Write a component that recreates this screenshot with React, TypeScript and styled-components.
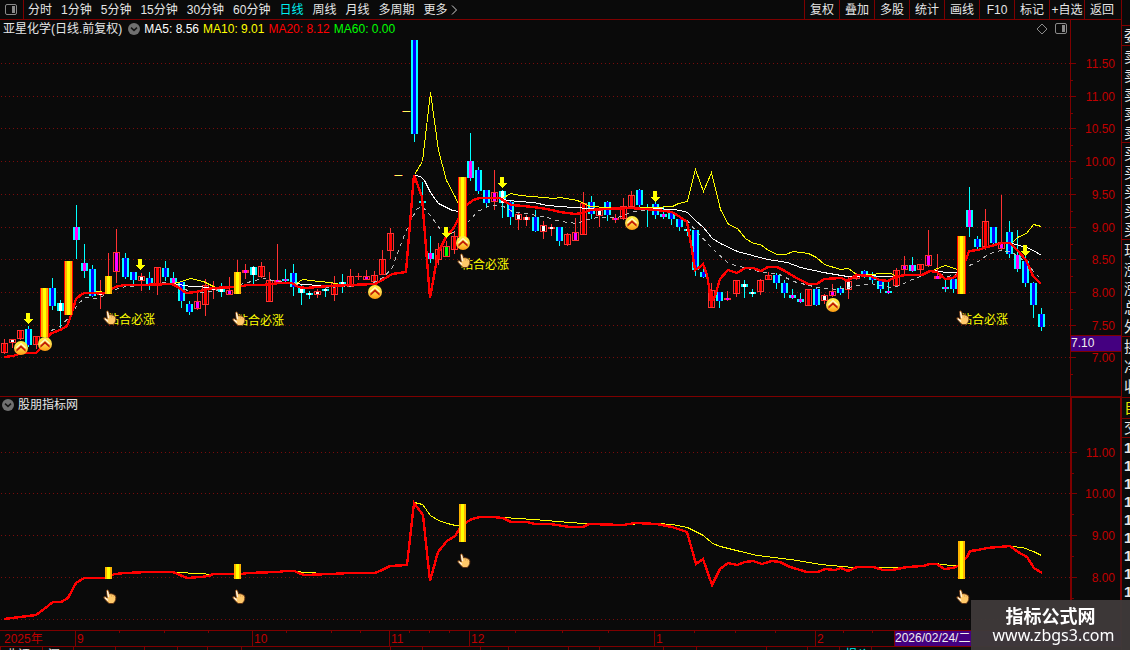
import React from "react";
import styled, { createGlobalStyle } from "styled-components";

const BG = "#0a0a0a";
const LINE = "#7e0000";
const AXIS_TEXT = "#c00000";
const SANS = '"Liberation Sans", "Noto Sans CJK SC", sans-serif';

const GlobalStyle = createGlobalStyle`
  * { box-sizing: border-box; }
  body { margin: 0; background: ${BG}; overflow: hidden; font: 12px/18px ${SANS}; color: #e6e6e6; }
  button { font: inherit; color: inherit; background: none; border: 0; padding: 0; margin: 0; cursor: pointer; white-space: nowrap; }
  svg { display: block; }
`;

const Page = styled.div`
  display: flex;
  height: 100vh;
  overflow: hidden;
  background: ${BG};
`;

const Main = styled.main`
  flex: 1;
  min-width: 0;
  display: flex;
  flex-direction: column;
`;

const Toolbar = styled.nav`
  display: flex;
  height: 20px;
  flex: none;
  border-bottom: 1px solid ${LINE};
`;

const LayoutButton = styled.button`
  width: 24px;
  padding-left: 5px;
  border-right: 1px solid ${LINE};
`;

const Periods = styled.div`
  display: flex;
  flex: 1;
  gap: 9px;
  padding-left: 4px;
`;

const PeriodButton = styled.button<{ $active?: boolean }>`
  display: flex;
  align-items: center;
  color: ${(p) => (p.$active ? "#00f0f0" : "#e6e6e6")};
`;

const ToolButton = styled.button`
  width: 35px;
  border-left: 1px solid ${LINE};
  text-align: center;
  &:last-child { width: 37px; padding-right: 2px; }
`;

const Panel = styled.section`
  display: flex;
  flex: none;
`;

const Plot = styled.div`
  flex: 1;
  min-width: 0;
  overflow: hidden;
`;

const Legend = styled.header<{ $height: number }>`
  display: flex;
  align-items: center;
  gap: 4px;
  height: ${(p) => p.$height}px;
  padding: 0 3px 1px 2px;
  white-space: nowrap;
`;

const StockName = styled.span`
  padding: 0 2px 0 1px;
`;

const LegendValue = styled.span<{ $color: string }>`
  color: ${(p) => p.$color};
`;

const LegendTools = styled.div`
  display: flex;
  gap: 7px;
  margin-left: auto;
`;

const Scale = styled.aside<{ $heavy?: boolean }>`
  position: relative;
  flex: 0 0 51px;
  border-left: ${(p) => (p.$heavy ? 2 : 1)}px solid ${LINE};
  border-right: ${(p) => (p.$heavy ? 1 : 0)}px solid ${LINE};
  border-top: ${(p) => (p.$heavy ? 1 : 0)}px solid ${LINE};
`;

const PriceTag = styled.output`
  position: absolute;
  left: 0;
  right: 0;
  top: 315px;
  height: 17px;
  line-height: 15px;
  background: #440080;
  border: solid ${LINE};
  border-width: 1px 0;
  color: #f0f0f0;
`;

const Divider = styled.div`
  flex: none;
  height: 1px;
  background: ${LINE};
`;

const TimeAxis = styled.div`
  position: relative;
  display: flex;
  flex: none;
  height: 17px;
  border: solid ${LINE};
  border-width: 1px 0;
  color: ${AXIS_TEXT};
`;

const Month = styled.span<{ $width: number }>`
  flex: 0 0 ${(p) => p.$width}px;
  line-height: 16px;
  padding-left: 1px;
  border-left: 1px solid ${LINE};
  &:first-child { border-left: 0; padding-left: 4px; }
`;

const CursorDate = styled.span`
  flex: 1;
  line-height: 15px;
  border-left: 1px solid ${LINE};
  background: #440080;
  color: #f0f0f0;
`;

const TickLayer = styled.svg`
  position: absolute;
  inset: 0;
`;

const StatusBar = styled.footer`
  display: flex;
  flex: 1;
  min-height: 0;
  overflow: hidden;
`;

const StatusCell = styled.span<{ $width: number; $color?: string }>`
  flex: 0 0 ${(p) => p.$width}px;
  padding-left: 5px;
  border-left: 1px solid ${LINE};
  white-space: nowrap;
  overflow: hidden;
  line-height: 16px;
  color: ${(p) => p.$color ?? "#e6e6e6"};
`;

const Quotes = styled.aside`
  flex: 0 0 9px;
  overflow: hidden;
  padding-top: 25px;
  border-left: 1px solid ${LINE};
`;

const QuoteGroup = styled.div<{ $row: number; $color?: string; $bold?: boolean }>`
  border-top: 1px solid ${LINE};
  padding: ${(p) => (p.$bold ? "1px 0 0 2px" : "0 0 0 2px")};
  font-size: 15px;
  font-weight: ${(p) => (p.$bold ? 700 : 400)};
  line-height: ${(p) => p.$row}px;
  color: ${(p) => p.$color ?? "#e6e6e6"};
  &:nth-child(n + 2):nth-child(-n + 4) { padding-top: 1px; }
`;

const QuoteRow = styled.div`
  white-space: nowrap;
`;

const Watermark = styled.div`
  position: fixed;
  right: 0;
  bottom: 0;
  width: 159px;
  height: 50px;
  padding-top: 5px;
  background: rgba(62, 57, 57, 0.97);
  color: #fff;
  text-align: center;
`;

const SiteName = styled.div`
  font: 700 18px/20px "Noto Sans CJK SC", sans-serif;
`;

const SiteUrl = styled.div`
  padding-left: 6px;
  font: 16px/21px "Noto Sans", sans-serif;
`;

/* ---------- data ---------- */

type Shape = "c" | "r";
type Core = "b" | "r" | "m" | "w" | "g";
/** high, body top, body bottom, low, outline, core */
type Candle = [number, number, number, number, Shape, Core] | null;

const CORES: Record<Core, string> = {
  b: "#0000ff",
  r: "#ff0000",
  m: "#ff00ff",
  w: "#ffffff",
  g: "#00ff00",
};

const candles: Candle[] = [
  [339, 343, 353, 354, "r", "r"], [339, 339, 343, 348, "r", "w"], [330, 330, 339, 340, "r", "r"],
  [326, 329, 345, 347, "c", "b"], [336, 336, 345, 349, "r", "r"], null,
  [278, 288, 306, 310, "c", "b"], [300, 303, 311, 329, "c", "w"], null,
  [205, 227, 240, 259, "c", "m"], [244, 263, 271, 278, "c", "m"], [265, 269, 296, 297, "c", "b"],
  [280, 293, 295, 309, "r", "w"], [253, 276, 294, 294, "r", "r"], [229, 252, 272, 283, "r", "m"],
  [253, 258, 277, 279, "c", "b"], [272, 272, 280, 286, "c", "b"], [273, 276, 281, 291, "r", "w"],
  [272, 278, 285, 290, "c", "b"], [267, 267, 284, 295, "r", "r"], [261, 268, 277, 281, "c", "b"],
  [272, 278, 283, 284, "c", "m"], [281, 282, 301, 308, "c", "b"], [301, 304, 312, 315, "c", "b"],
  [292, 301, 309, 310, "r", "m"], [279, 285, 305, 316, "r", "r"], [281, 288, 290, 299, "r", "w"],
  [283, 288, 292, 297, "c", "w"], [277, 290, 295, 295, "r", "m"], [260, 272, 294, 294, "r", "r"],
  [264, 270, 273, 279, "r", "m"], [266, 267, 275, 284, "c", "w"], [262, 266, 277, 278, "r", "r"],
  [272, 280, 302, 302, "r", "r"], [244, 280, 283, 283, "r", "m"], [269, 279, 281, 282, "c", "m"],
  [264, 273, 287, 296, "c", "b"], [284, 287, 293, 305, "c", "w"], [291, 293, 295, 299, "c", "w"],
  [289, 291, 295, 298, "r", "w"], [287, 289, 291, 297, "c", "w"], [276, 283, 295, 301, "r", "r"],
  [274, 282, 284, 293, "c", "w"], [269, 276, 287, 287, "r", "r"], [273, 276, 277, 280, "r", "r"],
  [270, 276, 280, 280, "r", "m"], [271, 275, 282, 283, "r", "r"], [250, 259, 275, 275, "r", "r"],
  [228, 233, 251, 259, "r", "r"], null, null, [40, 40, 134, 142, "c", "b"],
  [182, 201, 203, 207, "c", "m"], [236, 253, 259, 263, "c", "m"], [243, 249, 260, 265, "r", "r"],
  [241, 246, 257, 257, "r", "g"], [231, 236, 250, 254, "r", "r"], null,
  [133, 161, 178, 181, "c", "m"], [167, 170, 191, 194, "c", "b"], [190, 190, 203, 207, "c", "b"],
  [170, 192, 202, 210, "r", "m"], [190, 191, 203, 218, "c", "w"], [201, 202, 217, 225, "c", "b"],
  [212, 214, 220, 230, "r", "w"], [215, 217, 220, 226, "r", "w"], [210, 217, 231, 232, "c", "b"],
  [221, 225, 232, 239, "r", "w"], [224, 227, 229, 236, "r", "w"], [227, 227, 241, 246, "c", "b"],
  [233, 234, 245, 246, "r", "r"], [218, 232, 241, 241, "r", "m"], [192, 203, 235, 235, "r", "r"],
  [196, 202, 214, 219, "c", "b"], [207, 210, 216, 227, "r", "w"], [201, 202, 215, 221, "c", "b"],
  [214, 218, 220, 223, "r", "m"], [198, 206, 219, 220, "r", "r"], [191, 195, 207, 207, "r", "r"],
  [189, 190, 205, 208, "c", "b"], [204, 207, 208, 227, "c", "w"], [201, 204, 215, 219, "c", "b"],
  [207, 214, 217, 219, "c", "m"], [213, 213, 219, 225, "c", "b"], [219, 219, 227, 231, "c", "b"],
  [222, 229, 231, 236, "c", "w"], [230, 230, 270, 276, "c", "b"], [265, 272, 277, 278, "c", "b"],
  [283, 290, 308, 308, "r", "r"], [292, 292, 301, 308, "c", "b"], [291, 298, 300, 301, "r", "m"],
  [280, 280, 294, 297, "r", "r"], [280, 284, 287, 298, "c", "w"], [289, 292, 294, 297, "c", "w"],
  [279, 280, 292, 295, "r", "r"], [272, 275, 280, 280, "r", "r"], [273, 275, 283, 289, "c", "b"],
  [280, 283, 293, 298, "c", "b"], [289, 295, 298, 299, "c", "m"], [293, 299, 302, 303, "c", "m"],
  [289, 289, 306, 306, "r", "r"], [288, 289, 305, 306, "c", "b"], [294, 295, 301, 304, "r", "w"],
  [284, 291, 296, 297, "r", "m"], [286, 288, 293, 295, "c", "b"], [276, 281, 290, 299, "r", "w"],
  [273, 275, 279, 280, "r", "r"], [270, 271, 277, 278, "c", "b"], [272, 274, 280, 283, "c", "b"],
  [279, 281, 289, 293, "c", "b"], [282, 291, 293, 294, "c", "m"], [268, 270, 286, 286, "r", "r"],
  [256, 265, 270, 274, "r", "m"], [257, 265, 271, 272, "c", "m"], [264, 264, 270, 274, "r", "r"],
  [230, 255, 266, 267, "r", "m"], [254, 276, 279, 279, "r", "m"], [279, 287, 289, 292, "c", "m"],
  [276, 279, 289, 293, "c", "b"], null, [187, 210, 227, 237, "c", "m"],
  [236, 239, 247, 249, "c", "b"], [209, 221, 247, 250, "r", "r"], [227, 227, 243, 244, "c", "b"],
  [195, 242, 249, 250, "r", "m"], [221, 232, 254, 258, "c", "b"], [230, 255, 269, 272, "c", "m"],
  [256, 261, 283, 287, "c", "b"], [282, 283, 305, 318, "c", "b"], [308, 314, 327, 331, "c", "b"],
];

const slot = (i: number) => Math.round(3.9 + i * 8.04);

const priceMa20 =
  "4,357 13,356 22,353 36,353 44,345 50,334 60,330 67,326 70,318 76,299 82,294 85,293 106,293 115,287 124,285 140,285 172,284 178,287 186,293 196,292 204,290 212,288 237,287 248,285 262,285 280,283 292,283 298,287 306,288 330,286 350,285 375,284 384,279 392,274 406,272 414,175 422,197 430,298 435,270 438,253 446,237 453,229 458,220 467,205 473,200 480,198 500,198 507,203 512,205 533,207 547,209 560,212 575,214 583,213 590,210 603,209 630,208 657,210 672,212 680,217 687,222 692,250 695,270 700,267 703,264 707,275 709,287 711,303 715,296 720,279 728,270 737,273 745,268 753,268 761,271 768,267 777,267 785,271 793,276 808,284 817,284 824,279 842,278 847,281 857,275 870,276 880,280 888,281 895,277 905,275 922,275 930,271 937,272 945,279 953,278 957,275 966,260 969,251 978,250 987,247 1002,243 1010,243 1017,250 1026,260 1033,276 1041,284";

const priceYellow = [
  "96,291 106,292",
  "172,283 178,282 190,278 203,281 215,287 230,287",
  "296,283 302,279 318,281 330,282 340,284",
  "414,174 422,161 430,92 438,150 446,180 455,197 460,208",
  "502,198 510,193 520,195 543,197 553,198 560,197 577,200 590,206 607,207 653,207 672,206 678,203 687,201 695,169 703,191 711,172 720,209 728,224 737,228 745,238 753,243 760,244 768,250 777,254 785,254 793,251 808,253 816,257 824,264 840,269 848,268 856,274 873,274 878,273 890,273 895,275",
  "934,269 945,265 957,269",
  "1012,242 1017,237 1026,233 1033,224 1041,226",
];

const priceWhite = [
  "172,283 190,286 215,287",
  "297,283 302,284 340,286",
  "414,175 420,176 424,180 430,192 438,203 452,210 458,211",
  "502,199 517,201 533,202 547,205 573,207 590,208 653,208 673,209 680,210 687,212 695,220 703,227 712,238 720,243 737,251 767,259 787,262 800,267 823,272 847,276 873,275 878,276 893,276",
  "934,270 945,272 957,272",
  "1012,243 1026,247 1033,250 1041,255",
];

const priceDashed = [
  "51,330 60,326 70,315 78,303 85,297 98,298 112,290 125,286 150,285 160,282 172,283 187,290 200,292 215,290 240,284 258,279 263,278 277,281 293,282 303,287 323,287 347,286 373,282 383,277 392,267 398,250 403,237 410,220 417,208 422,206 430,215 440,229 450,233 457,230",
  "467,222 477,211 490,205 503,206 512,211 543,216 560,221 577,223 587,219 597,217 617,217 633,211 657,209 672,213 687,220 695,230 712,248 728,263 747,268 763,272 777,273 793,281 817,287 837,289 853,286 870,283 890,287 900,285 907,281 920,276 930,271 947,276 957,274",
  "969,265 980,260 987,254 1000,250 1012,252 1026,262 1033,271 1041,279",
];

const subRed =
  "4,619 12,618 20,617 36,615 44,609 53,602 61,602 68,598 76,583 84,578 105,578 115,574 125,573 148,572 173,572 180,575 187,578 200,577 209,576 213,574 242,574 247,573 277,572 286,571 295,571 298,573 305,575 330,574 350,573 375,573 380,571 390,566 407,565 414,503 423,515 430,581 438,552 447,541 455,536 460,528 467,522 472,519 480,517 493,517 503,518 511,522 527,522 535,524 550,524 570,527 583,527 589,524 623,525 635,523 657,524 672,527 687,532 696,564 703,559 712,585 720,569 728,563 737,565 745,562 753,561 762,564 772,561 780,562 790,567 807,572 818,572 825,569 835,570 841,568 848,571 857,567 873,567 883,570 892,570 907,567 923,566 930,564 937,564 944,569 953,568 958,566 967,557 970,551 978,550 987,548 1010,546 1018,552 1027,557 1034,568 1042,573";

const subYellow = [
  "175,572 200,573 210,574",
  "296,571 305,572 325,573",
  "414,502 422,504 430,515 438,520 447,523 455,525 462,525",
  "503,517 533,519 557,521 583,523 612,524 657,523 672,524 687,527 703,535 712,543 720,546 740,551 757,555 797,560 820,564 853,567 897,567",
  "935,563 950,565 958,565",
  "1010,546 1022,547 1033,551 1041,555",
];

const periods = ["分时", "1分钟", "5分钟", "15分钟", "30分钟", "60分钟", "日线", "周线", "月线", "多周期"];
const tools = ["复权", "叠加", "多股", "统计", "画线", "F10", "标记", "+自选", "返回"];
const priceGrid = [63, 96, 128, 161, 194, 227, 259, 292, 325, 357];
const subGrid = [452, 493, 535, 577, 619];
const coins = [[21, 348], [45, 344], [375, 292], [463, 243], [632, 223], [833, 305]];
const arrows = [[28, 313], [140, 259], [446, 227], [502, 177], [655, 191], [1025, 245]];
/** hand x, hand y, label baseline */
const signals = [[103, 310, 324], [232, 311, 325], [457, 253, 269], [956, 310, 324]];
const subSignals = [[103, 589], [232, 589], [457, 553], [956, 589]];
const bigBars = [[5, 288, 337], [8, 261, 315], [57, 177, 237], [119, 236, 294]];
const slimBars = [[13, 276, 294], [29, 272, 294]];
const subBars = [[13, 567, 579], [29, 564, 579], [57, 504, 542], [119, 541, 579]];
const months: [string, number][] = [
  ["2025年", 75], ["9", 177], ["10", 137], ["11", 80], ["12", 185], ["1", 161], ["2", 79],
];
const ticks = [119, 164, 208, 286, 331, 360, 409, 429, 449, 515, 562, 608, 694, 735, 775, 843, 872];
const statusCells: [string, number, string?][] = [
  ["北证", 42], ["深", 31], ["", 42], ["", 29], ["", 33], ["", 30], ["", 34], ["", 149], ["", 32], ["", 58],
  ["", 28], ["", 60], ["", 31], ["", 64], ["", 33], ["", 70], ["", 41], ["", 32], ["报价", 32, "#00f0f0"], ["", 100],
];

/* ---------- drawings ---------- */

function CandleMark({ x, candle }: { x: number; candle: NonNullable<Candle> }) {
  const [high, top, bottom, low, shape, core] = candle;
  const edge = shape === "c" ? "#00ffff" : "#ff3232";
  const h = Math.max(bottom - top, 1);
  const hollow = shape === "r" && h > 3;
  return (
    <g>
      <rect x={x} y={high} width={1} height={Math.max(low - high, 1)} fill={edge} />
      <rect x={x - 3} y={top} width={7} height={h} fill={edge} />
      {hollow && <rect x={x - 2} y={top + 1} width={5} height={h - 2} fill={BG} />}
      {h > 1 && (
        <rect x={x - 1} y={hollow ? top + 1 : top} width={3} height={hollow ? h - 2 : h} fill={CORES[core]} />
      )}
    </g>
  );
}

function SignalBar({ x, top, bottom, wide }: { x: number; top: number; bottom: number; wide?: boolean }) {
  const h = bottom - top;
  return (
    <g>
      {wide && <rect x={x - 4} y={top} width={9} height={h} fill="#ff0000" />}
      <rect x={x - 3} y={top} width={7} height={h} fill="#ffb400" />
      <rect x={x - 1} y={top} width={3} height={h} fill="#ffff00" />
    </g>
  );
}

function Lines({ data, color, dash }: { data: string[]; color: string; dash?: string }) {
  return (
    <g fill="none" stroke={color} strokeWidth={1} strokeDasharray={dash} transform="translate(0.5 0.5)">
      {data.map((points) => (
        <polyline key={points} points={points} />
      ))}
    </g>
  );
}

function Grid({ rows }: { rows: number[] }) {
  return (
    <g stroke="#7a0c0c" strokeDasharray="1 3">
      {rows.map((y) => (
        <line key={y} x1={1} x2="100%" y1={y + 0.5} y2={y + 0.5} />
      ))}
    </g>
  );
}

function Hand({ x, y }: { x: number; y: number }) {
  return (
    <g transform={`translate(${x} ${y})`} shapeRendering="auto">
      <path
        d="M3.4 1.6Q4.4.2 5.5 1.4L6.7 5Q8 4.2 9 5Q10.4 4.7 11 5.8Q12.8 6 12.9 8.2Q13 11 11.9 12.6L10.3 14.5H6L3.9 12.4L.8 9Q.4 7.4 2 7.6L4.3 8.8Z"
        fill="#ffc96a"
        stroke="#5e2d10"
        strokeWidth="0.9"
      />
      <path d="M4.4 2L5.6 8.2M2 8.8L5 11.4" fill="none" stroke="#fff3e0" strokeWidth="1.3" />
      <path d="M8.3 5.8L8.8 8M10.5 6.2L10.8 8.2" stroke="#dd9c4c" strokeWidth="0.6" />
    </g>
  );
}

function Coin({ x, y }: { x: number; y: number }) {
  return (
    <g transform={`translate(${x} ${y})`} shapeRendering="auto">
      <circle r="7" fill="url(#coin)" />
      <path d="M-4.6 -.2L0 -4.4L4.6 -.2" fill="none" stroke="#fff6c8" strokeWidth="1.3" />
      <path d="M-4.6 1.4L0 -2.7L4.6 1.4V3.8L0 -.2L-4.6 3.8Z" fill="#c01808" />
    </g>
  );
}

function ChevronBadge() {
  return (
    <svg width="12" height="12" viewBox="0 0 12 12">
      <circle cx="6" cy="6" r="6" fill="#707070" />
      <path d="M3 4.6L6 7.4L9 4.6" fill="none" stroke="#151515" strokeWidth="1.5" />
    </svg>
  );
}

function PaneIcon() {
  return (
    <svg width="12" height="12" viewBox="0 0 12 12">
      <rect x=".5" y=".5" width="11" height="10" rx="1.5" fill="none" stroke="#8a8a8a" />
      <rect x="7" y="2" width="3" height="7" fill="#8a8a8a" />
    </svg>
  );
}

type ScaleMarksProps = { rows: number[]; labels: string[]; top: number; height: number; labelX: number };

function ScaleMarks({ rows, labels, top, height, labelX }: ScaleMarksProps) {
  const step = rows[1] - rows[0];
  return (
    <svg width="100%" height={height} shapeRendering="crispEdges">
      <g transform={`translate(0 ${-top})`}>
        {rows.map((y, i) => (
          <g key={y}>
            <rect x="0" y={y} width="5" height="1" fill={LINE} />
            <rect x="0" y={y + Math.round(step / 2)} width="2" height="1" fill={LINE} />
            {labels[i] && (
              <text x={labelX} y={y + 5} textAnchor="end" fill={AXIS_TEXT}>
                {labels[i]}
              </text>
            )}
          </g>
        ))}
      </g>
    </svg>
  );
}

function PriceChart() {
  return (
    <svg width="100%" height="357" shapeRendering="crispEdges" role="img" aria-label="日线">
      <defs>
        <linearGradient id="coin" x1="0" y1="0" x2="0" y2="1">
          <stop offset="0" stopColor="#fff03c" />
          <stop offset="0.5" stopColor="#ffd84a" />
          <stop offset="1" stopColor="#ff9a10" />
        </linearGradient>
      </defs>
      <g transform="translate(0 -39)">
        <Grid rows={priceGrid} />
        {candles.map((c, i) => c && <CandleMark key={i} x={slot(i)} candle={c} />)}
        {[[394, 175], [402, 111]].map(([x, y]) => (
          <g key={x}>
            <rect x={x} y={y} width="9" height="1" fill="#ff3232" />
            <rect x={x + 1} y={y} width="7" height="1" fill="#ffff60" />
          </g>
        ))}
        <Lines data={priceDashed} color="#b8b8b8" dash="4 4" />
        <Lines data={priceWhite} color="#ffffff" />
        <Lines data={priceYellow} color="#ffff00" />
        <polyline points={priceMa20} fill="none" stroke="#ff0000" strokeWidth="2.4" />
        {bigBars.map(([i, t, b]) => <SignalBar key={i} x={slot(i)} top={t} bottom={b} wide />)}
        {slimBars.map(([i, t, b]) => <SignalBar key={i} x={slot(i)} top={t} bottom={b} />)}
        {arrows.map(([x, y]) => (
          <path key={x} d={`M${x - 2} ${y}h4v6h3l-5 5l-5 -5h3z`} fill="#ffff00" />
        ))}
        {coins.map(([x, y]) => <Coin key={x} x={x} y={y} />)}
        {signals.map(([x, y, baseline]) => (
          <g key={x}>
            <text x={x + 4} y={baseline} fill="#ffff00">粘合必涨</text>
            <Hand x={x} y={y} />
          </g>
        ))}
      </g>
    </svg>
  );
}

function SubChart() {
  return (
    <svg width="100%" height="216" shapeRendering="crispEdges" role="img" aria-label="股朋指标网">
      <g transform="translate(0 -414)">
        <Grid rows={subGrid} />
        <Lines data={subYellow} color="#ffff00" />
        <polyline points={subRed} fill="none" stroke="#ff0000" strokeWidth="2.4" />
        {subBars.map(([i, t, b]) => <SignalBar key={i} x={slot(i)} top={t} bottom={b} />)}
        {subSignals.map(([x, y]) => <Hand key={x} x={x} y={y} />)}
      </g>
    </svg>
  );
}

function QuoteList({ items, row, color, bold }: { items: string; row: number; color?: string; bold?: boolean }) {
  return (
    <QuoteGroup $row={row} $color={color} $bold={bold}>
      {[...items].map((item, i) => (
        <QuoteRow key={i}>{item}</QuoteRow>
      ))}
    </QuoteGroup>
  );
}

export default function App() {
  return (
    <Page>
      <GlobalStyle />
      <Main>
        <Toolbar>
          <LayoutButton aria-label="布局"><PaneIcon /></LayoutButton>
          <Periods>
            {periods.map((p) => (
              <PeriodButton key={p} $active={p === "日线"}>{p}</PeriodButton>
            ))}
            <PeriodButton>
              更多
              <svg width="12" height="12" viewBox="0 0 12 12">
                <path d="M4 1.5L8.5 6L4 10.5" fill="none" stroke="#d0d0d0" />
              </svg>
            </PeriodButton>
          </Periods>
          {tools.map((t) => (
            <ToolButton key={t}>{t}</ToolButton>
          ))}
        </Toolbar>

        <Panel>
          <Plot>
            <Legend $height={19}>
              <StockName>亚星化学(日线.前复权)</StockName>
              <button aria-label="指标菜单"><ChevronBadge /></button>
              <LegendValue $color="#ffffff">MA5: 8.56</LegendValue>
              <LegendValue $color="#ffff00">MA10: 9.01</LegendValue>
              <LegendValue $color="#ff0000">MA20: 8.12</LegendValue>
              <LegendValue $color="#00ff00">MA60: 0.00</LegendValue>
              <LegendTools>
                <svg width="12" height="12" viewBox="0 0 12 12">
                  <path d="M6 1L11 6L6 11L1 6Z" fill="none" stroke="#8a8a8a" />
                </svg>
                <button aria-label="侧栏"><PaneIcon /></button>
              </LegendTools>
            </Legend>
            <PriceChart />
          </Plot>
          <Scale>
            <ScaleMarks
              rows={priceGrid}
              labels={["11.50", "11.00", "10.50", "10.00", "9.50", "9.00", "8.50", "8.00", "7.50", "7.00"]}
              top={20}
              height={376}
              labelX={44}
            />
            <PriceTag>7.10</PriceTag>
          </Scale>
        </Panel>
        <Divider />
        <Panel>
          <Plot>
            <Legend $height={17}>
              <button aria-label="指标菜单"><ChevronBadge /></button>
              <span>股朋指标网</span>
            </Legend>
            <SubChart />
          </Plot>
          <Scale $heavy>
            <ScaleMarks
              rows={subGrid}
              labels={["11.00", "10.00", "9.00", "8.00"]}
              top={398}
              height={232}
              labelX={43}
            />
          </Scale>
        </Panel>

        <TimeAxis>
          {months.map(([label, width]) => (
            <Month key={label} $width={width}>{label}</Month>
          ))}
          <CursorDate>2026/02/24/二</CursorDate>
          <TickLayer width="100%" height="3" shapeRendering="crispEdges">
            {ticks.map((x) => (
              <rect key={x} x={x} y="0" width="1" height="2" fill={LINE} />
            ))}
          </TickLayer>
        </TimeAxis>
        <StatusBar>
          {statusCells.map(([text, width, color], i) => (
            <StatusCell key={i} $width={width} $color={color}>{text}</StatusCell>
          ))}
        </StatusBar>
      </Main>

      <Quotes>
        <QuoteList items="委" row={19} />
        <QuoteList items="卖卖卖卖卖" row={19} />
        <QuoteList items="买买买买买" row={19} />
        <QuoteList items="现涨涨总外" row={19} />
        <QuoteList items="换净收" row={20} />
        <QuoteList items="自" row={20} color="#e6e600" />
        <QuoteList items="交" row={18} />
        <QuoteList items="111111111" row={18} bold />
      </Quotes>

      <Watermark>
        <SiteName>指标公式网</SiteName>
        <SiteUrl>www.zbgs3.com</SiteUrl>
      </Watermark>
    </Page>
  );
}
